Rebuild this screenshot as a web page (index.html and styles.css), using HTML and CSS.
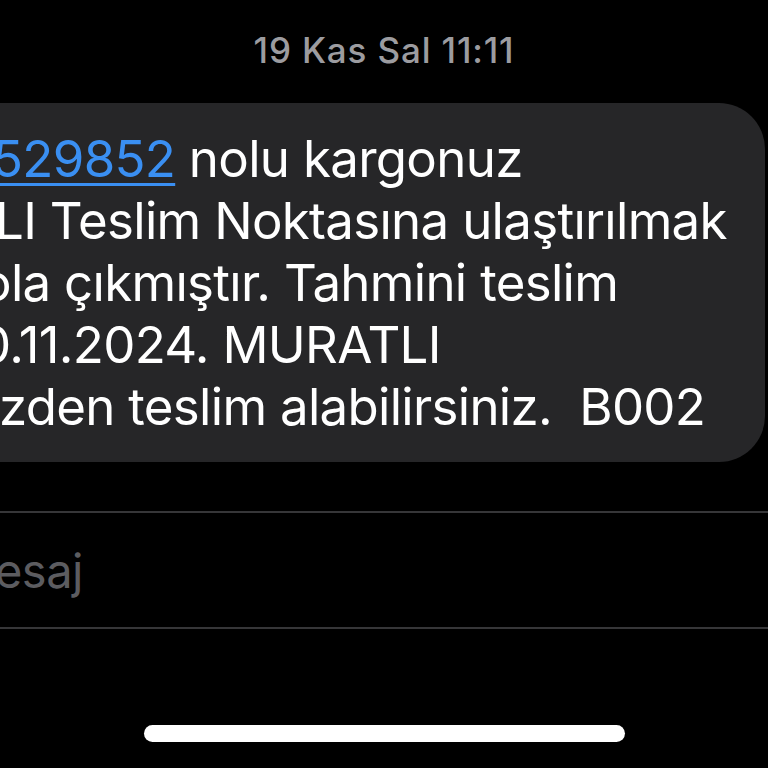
FILE: index.html
```html
<!DOCTYPE html>
<html lang="tr">
<head>
    <meta charset="UTF-8">
    <meta name="viewport" content="width=device-width, initial-scale=1.0">
    <title>Mesajlar</title>
    <link rel="stylesheet" href="styles.css">
</head>
<body>
    <div class="screen">
        <div class="date">19 Kas Sal 11:11</div>

        <div class="thread">
            <div class="bubble">
                <div class="line line-1"><a href="#">529852</a> nolu kargonuz</div>
                <div class="line line-2">LI Teslim Noktasına ulaştırılmak</div>
                <div class="line line-3">ola çıkmıştır. Tahmini teslim</div>
                <div class="line line-4">0.11.2024. MURATLI</div>
                <div class="line line-5">zden teslim alabilirsiniz.&nbsp; B002</div>
            </div>
        </div>

        <div class="composer">
            <span class="placeholder">Mesaj</span>
        </div>

        <div class="home-indicator"></div>
    </div>
</body>
</html>
```

FILE: styles.css
```css
body {
    margin: 0;
    padding: 0;
    background-color: #000;
    font-family: Inter, "Noto Sans", sans-serif;
    overflow: hidden;
}

.screen {
    width: 768px;
    height: 768px;
    overflow: hidden;
}

.date {
    margin-top: 30px;
    text-align: center;
    font-size: 35px;
    line-height: 40px;
    font-weight: 500;
    letter-spacing: 0.85px;
    color: #9c9ca0;
}

.thread {
    margin-top: 33px;
}

.bubble {
    width: 765px;
    height: 359px;
    box-sizing: border-box;
    background-color: #262628;
    border-radius: 0 46px 46px 0;
    padding-top: 25px;
    overflow: hidden;
    color: #fff;
    font-size: 51px;
    line-height: 62px;
    letter-spacing: -0.7px;
    white-space: nowrap;
}

.bubble a {
    color: #3a8ff2;
    text-decoration: underline;
    text-decoration-thickness: 3px;
    text-underline-offset: 6px;
}

.line-1 { margin-left: -8px; }
.line-2 { margin-left: -5px; }
.line-3 { margin-left: -19px; }
.line-4 { margin-left: -21px; }
.line-5 { margin-left: -1px; }

.composer {
    margin-top: 49px;
    height: 114px;
    border-top: 2px solid #363638;
    border-bottom: 2px solid #363638;
    display: flex;
    align-items: center;
    overflow: hidden;
}

.placeholder {
    margin-left: -47px;
    font-size: 47px;
    letter-spacing: -0.5px;
    color: #5c5c60;
}

.home-indicator {
    width: 481px;
    height: 17px;
    margin: 96px auto 0;
    border-radius: 9px;
    background-color: #fff;
}
```
